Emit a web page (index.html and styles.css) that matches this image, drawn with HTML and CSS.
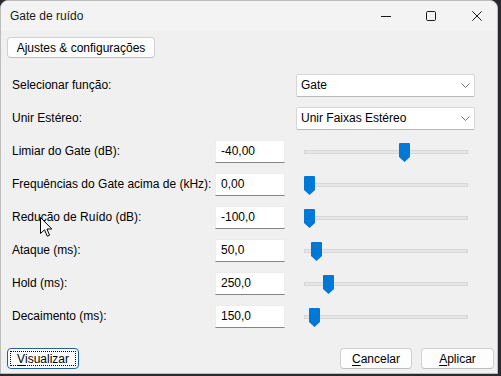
FILE: index.html
```html
<!DOCTYPE html>
<html lang="pt">
<head>
<meta charset="utf-8">
<title>Gate de ruído</title>
<link rel="stylesheet" href="styles.css">
</head>
<body>
<div class="window">
  <div class="titlebar">
    <span class="title">Gate de ruído</span>
    <div class="controls">
      <svg class="cap min" width="10" height="10" viewBox="0 0 10 10"><path d="M0 5.5H10" stroke="#1a1a1a" stroke-width="1"/></svg>
      <svg class="cap max" width="10" height="10" viewBox="0 0 10 10"><rect x="0.5" y="0.5" width="9" height="9" rx="1.2" fill="none" stroke="#1a1a1a" stroke-width="1"/></svg>
      <svg class="cap close" width="10" height="10" viewBox="0 0 10 10"><path d="M0.3 0.3L9.7 9.7M9.7 0.3L0.3 9.7" stroke="#1a1a1a" stroke-width="1"/></svg>
    </div>
  </div>
  <div class="content">
    <button class="btn settings">Ajustes &amp; configurações</button>
    <div class="form">
      <div class="row">
        <span class="label wide">Selecionar função:</span>
        <div class="select">Gate<svg class="chev" width="9" height="5" viewBox="0 0 9 5"><path d="M0.5 0.5L4.5 4.5L8.5 0.5" fill="none" stroke="#707070" stroke-width="1"/></svg></div>
      </div>
      <div class="row">
        <span class="label wide">Unir Estéreo:</span>
        <div class="select">Unir Faixas Estéreo<svg class="chev" width="9" height="5" viewBox="0 0 9 5"><path d="M0.5 0.5L4.5 4.5L8.5 0.5" fill="none" stroke="#707070" stroke-width="1"/></svg></div>
      </div>
      <div class="row">
        <span class="label">Limiar do Gate (dB):</span>
        <div class="input">-40,00</div>
        <div class="slider"><div class="track"></div><svg class="thumb" style="left:95px" width="11" height="19" viewBox="0 0 11 19"><path d="M1 0H10A1 1 0 0 1 11 1V14L5.5 19L0 14V1A1 1 0 0 1 1 0Z" fill="#0078d7"/></svg></div>
      </div>
      <div class="row">
        <span class="label">Frequências do Gate acima de (kHz):</span>
        <div class="input">0,00</div>
        <div class="slider"><div class="track"></div><svg class="thumb" style="left:0px" width="11" height="19" viewBox="0 0 11 19"><path d="M1 0H10A1 1 0 0 1 11 1V14L5.5 19L0 14V1A1 1 0 0 1 1 0Z" fill="#0078d7"/></svg></div>
      </div>
      <div class="row">
        <span class="label">Redução de Ruído (dB):</span>
        <div class="input">-100,0</div>
        <div class="slider"><div class="track"></div><svg class="thumb" style="left:0px" width="11" height="19" viewBox="0 0 11 19"><path d="M1 0H10A1 1 0 0 1 11 1V14L5.5 19L0 14V1A1 1 0 0 1 1 0Z" fill="#0078d7"/></svg></div>
      </div>
      <div class="row">
        <span class="label">Ataque (ms):</span>
        <div class="input">50,0</div>
        <div class="slider"><div class="track"></div><svg class="thumb" style="left:7px" width="11" height="19" viewBox="0 0 11 19"><path d="M1 0H10A1 1 0 0 1 11 1V14L5.5 19L0 14V1A1 1 0 0 1 1 0Z" fill="#0078d7"/></svg></div>
      </div>
      <div class="row">
        <span class="label">Hold (ms):</span>
        <div class="input">250,0</div>
        <div class="slider"><div class="track"></div><svg class="thumb" style="left:19px" width="11" height="19" viewBox="0 0 11 19"><path d="M1 0H10A1 1 0 0 1 11 1V14L5.5 19L0 14V1A1 1 0 0 1 1 0Z" fill="#0078d7"/></svg></div>
      </div>
      <div class="row">
        <span class="label">Decaimento (ms):</span>
        <div class="input">150,0</div>
        <div class="slider"><div class="track"></div><svg class="thumb" style="left:5px" width="11" height="19" viewBox="0 0 11 19"><path d="M1 0H10A1 1 0 0 1 11 1V14L5.5 19L0 14V1A1 1 0 0 1 1 0Z" fill="#0078d7"/></svg></div>
      </div>
    </div>
    <div class="footer">
      <button class="btn preview focused"><u>V</u>isualizar</button>
      <div class="spacer"></div>
      <button class="btn cancel"><u>C</u>ancelar</button>
      <button class="btn apply"><u>A</u>plicar</button>
    </div>
  </div>
  <svg class="cursor" width="13" height="20" viewBox="0 0 13 20"><path d="M0.5 0.5V16.5L4.5 12.8L7.3 19.2L9.6 18.2L6.9 12H11.8Z" fill="#fff" stroke="#000" stroke-width="1" stroke-linejoin="round"/></svg>
</div>
</body>
</html>
```

FILE: styles.css
```css
* { box-sizing: border-box; }

html, body {
  margin: 0;
  padding: 0;
}

body {
  width: 501px;
  height: 376px;
  background: #2a2830;
  overflow: hidden;
  font-family: "Liberation Sans", Arial, sans-serif;
  font-size: 12px;
  color: #000;
}

.window {
  position: relative;
  width: 498px;
  height: 374px;
  background: #f0f0f0;
  border: 1px solid #bdbdbd;
  border-radius: 8px 8px 0 0;
  display: flex;
  flex-direction: column;
  overflow: hidden;
}

.titlebar {
  height: 30px;
  flex: none;
  background: #f3f3f3;
  display: flex;
  align-items: center;
  padding-left: 9px;
}

.title {
  font-size: 12px;
  color: #1a1a1a;
  flex: 1;
}

.controls {
  display: flex;
  align-items: center;
  padding-right: 15px;
}

.cap { display: block; }
.cap.min { margin-right: 35px; }
.cap.max { margin-right: 36px; }

.content {
  flex: 1;
  display: flex;
  flex-direction: column;
  padding: 6px 3px 4px 6px;
}

.btn {
  font-family: "Liberation Sans", Arial, sans-serif;
  font-size: 12px;
  color: #000;
  height: 21px;
  padding: 0;
  background: #fdfdfd;
  border: 1px solid #d0d0d0;
  border-bottom-color: #bdbdbd;
  border-radius: 4px;
  display: flex;
  align-items: center;
  justify-content: center;
  flex: none;
}

.btn u { text-underline-offset: 2px; }

.settings {
  width: 148px;
  align-self: flex-start;
}

.form {
  margin-top: 16px;
  padding-left: 5px;
  display: flex;
  flex-direction: column;
  gap: 11px;
}

.row {
  height: 22px;
  display: flex;
  align-items: center;
}

.label {
  width: 203px;
  flex: none;
  white-space: nowrap;
}

.label.wide { width: 284px; }

.select {
  width: 179px;
  height: 23px;
  background: #fff;
  border: 1px solid #d6d6d6;
  border-bottom-color: #b9b9b9;
  border-radius: 2px;
  display: flex;
  align-items: center;
  justify-content: space-between;
  padding: 0 4px 0 4px;
}

.chev { display: block; margin-top: 1px; }

.input {
  width: 70px;
  height: 23px;
  flex: none;
  background: #fff;
  border: 1px solid #ececec;
  border-bottom: 1px solid #858585;
  display: flex;
  align-items: center;
  padding-left: 5px;
}

.slider {
  position: relative;
  margin-left: 19px;
  width: 164px;
  height: 22px;
}

.track {
  margin-top: 10px;
  height: 4px;
  background: #e6e6e6;
  border: 1px solid #d7d7d7;
}

.thumb {
  position: absolute;
  top: 3px;
  display: block;
}

.footer {
  margin-top: auto;
  display: flex;
  align-items: center;
}

.spacer { flex: 1; }

.preview {
  width: 72px;
  border: 1px solid #1f5fa8;
  outline: 1px dotted #000;
  outline-offset: -4px;
}

.cancel { width: 72px; margin-right: 9px; }
.apply { width: 73px; }

.cursor {
  position: absolute;
  left: 39px;
  top: 216px;
}
```
